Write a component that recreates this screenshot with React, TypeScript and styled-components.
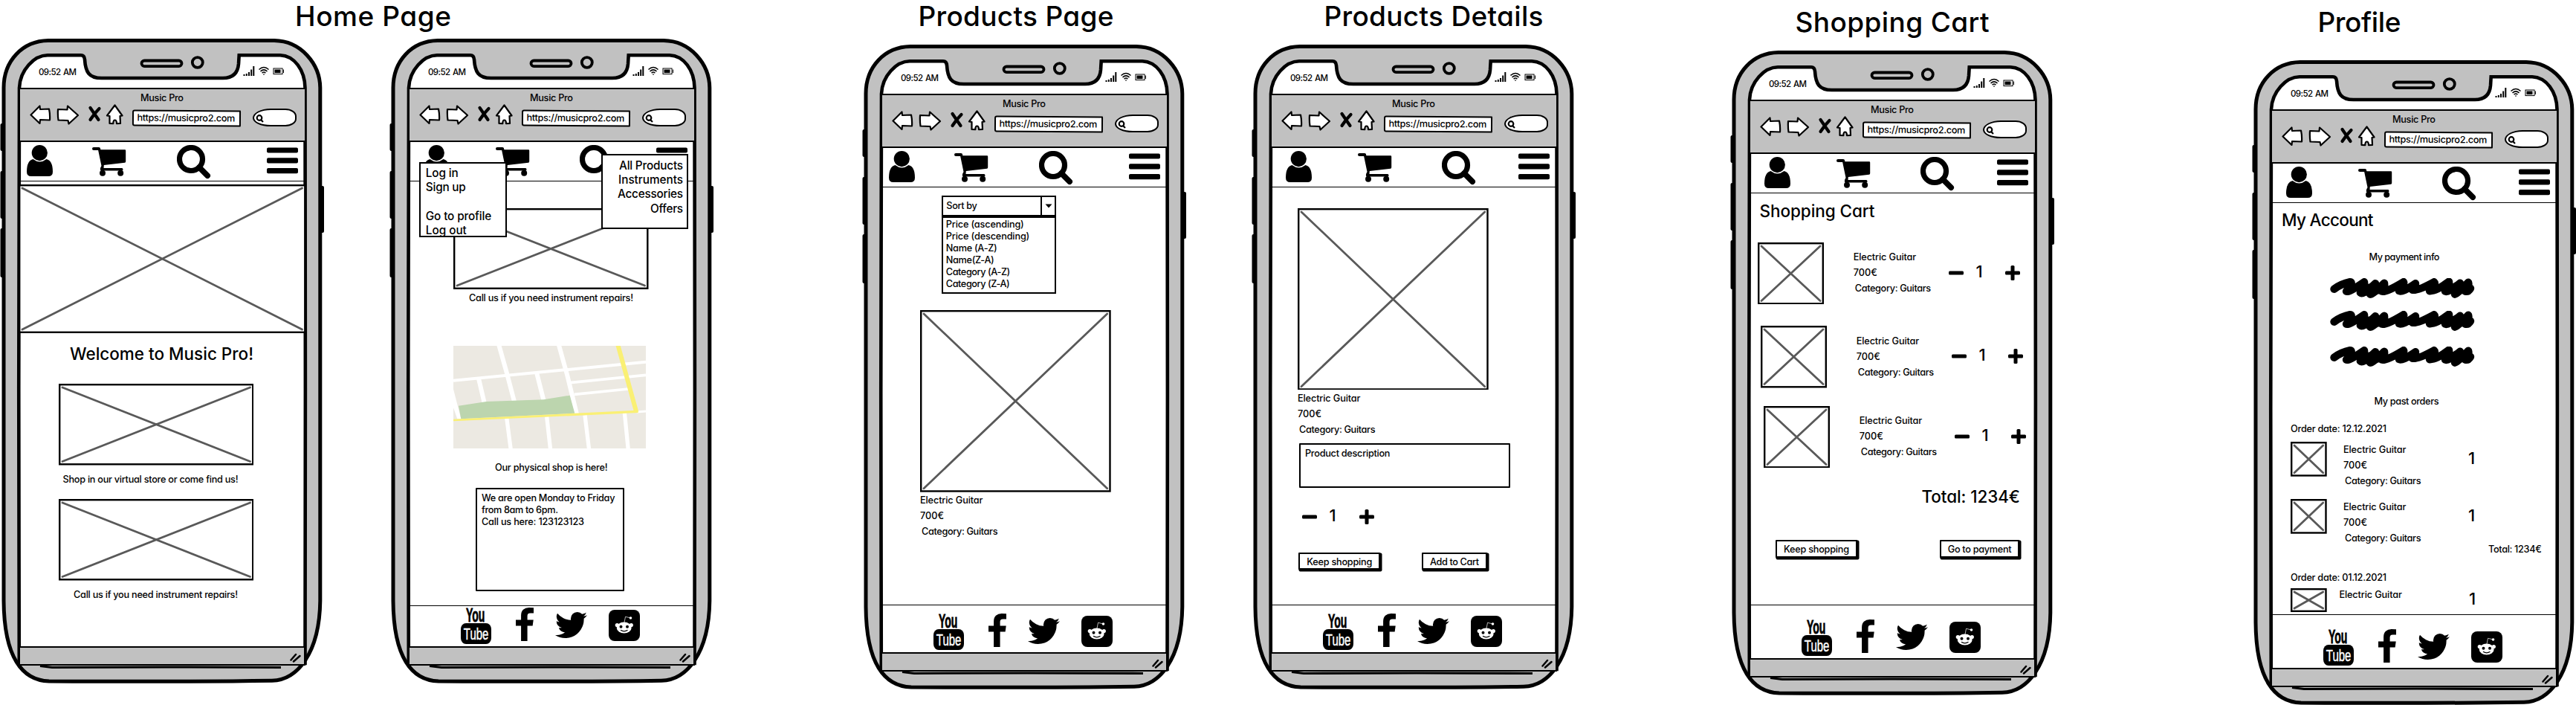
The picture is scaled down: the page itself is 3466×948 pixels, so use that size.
import React, { useLayoutEffect, useRef } from "react";
import styled, { createGlobalStyle, css } from "styled-components";

const INK = "#000";
const GREY = "#c1c1c1";

const GlobalStyle = createGlobalStyle`
  body {
    margin: 0;
    background: #fff;
    color: ${INK};
    font-family: Inter, "Open Sans", sans-serif;
    font-feature-settings: "cv11" 1, "kern" 1;
    overflow: hidden;
  }
  svg { display: block; flex: none; }
`;

/* ---------- text ---------- */

type Scale = "clock" | "note" | "menu" | "heading" | "title";

const scales = {
  clock: css`font-size: 11.500px; line-height: 16px; font-weight: 450; word-spacing: 1px;`,
  note: css`font-size: 12.700px; line-height: 17px; margin-bottom: -1px; font-weight: 480;`,
  menu: css`font-size: 15.300px; line-height: 19px; font-weight: 450;`,
  heading: css`font-size: 22.500px; line-height: 26px; font-weight: 500;`,
  title: css`font-size: 37px; line-height: 44px; font-weight: 540;`,
};

const TextLine = styled.div<{ $scale: Scale; $x: number; $gap: number }>`
  ${(p) => scales[p.$scale]}
  margin-left: ${(p) => p.$x}px;
  margin-top: ${(p) => p.$gap}px;
  white-space: pre;
  width: max-content;
  flex: none;
`;

interface LabelProps {
  children: string;
  width: number;
  scale?: Scale;
  x?: number;
  gap?: number;
}

/** A single line whose tracking is adjusted so that it fills a given width. */
function Label({ children, width, scale = "note", x = 0, gap = 0 }: LabelProps) {
  const ref = useRef<HTMLDivElement>(null);
  useLayoutEffect(() => {
    const el = ref.current;
    if (!el) return;
    el.style.letterSpacing = "0px";
    const natural = el.getBoundingClientRect().width;
    const space = (width + 1 - natural) / Math.max(1, children.length - 1);
    el.style.letterSpacing = `${space}px`;
    el.style.marginRight = `${-space}px`;
  }, [children, width]);
  return (
    <TextLine ref={ref} $scale={scale} $x={x} $gap={gap}>
      {children}
    </TextLine>
  );
}

const Digit = styled.div<{ $x: number; $gap?: number }>`
  font-size: 22px;
  line-height: 26px;
  font-weight: 500;
  margin-left: ${(p) => p.$x}px;
  margin-top: ${(p) => p.$gap ?? 0}px;
  width: 9px;
`;

/* ---------- phone shell ---------- */

const PhoneFrame = styled.div`
  position: relative;
  width: 437px;
  height: 868px;
  flex: none;
  display: flex;
  flex-direction: column;
`;

const ShellArt = styled.svg`
  position: absolute;
  left: 0;
  top: 0;
  z-index: 0;
`;

const Shell = () => (
  <ShellArt width="437" height="868" viewBox="0 0 437 868" fill="none">
    <g fill={INK}>
      <rect x="0.5" y="114" width="6" height="37" rx="2" />
      <rect x="0.5" y="178" width="6" height="64" rx="2" />
      <rect x="0.5" y="255" width="6" height="66" rx="2" />
      <rect x="429" y="198" width="7" height="63" rx="2" />
    </g>
    <path
      d="M65 2.500 H369 C405 3 430.500 34 430.800 66 V440 C431.500 560 431.500 660 430.800 756 C430 826 400 862.500 366 863.200 C260 864.800 160 864.500 66 864 C30 863 5.500 832 5 756 C4.500 660 4.500 560 5 440 V66 C5 30 30 3 65 2.500 Z"
      fill={GREY}
      stroke={INK}
      strokeWidth="5"
    />
    <path
      d="M25.800 840 C25.500 600 24.500 300 26 66 C27 42 46 22.500 64 22.300 H109 Q113.500 22.300 114 28 C115 44 119 53.500 138 53 H300 C314 53 320 46 321 34 L321.700 22.300 H377 C396 23 410 42 410.500 66 C411 300 411 600 410.500 840 Z"
      fill="#fff"
      stroke={INK}
      strokeWidth="4.600"
    />
    <rect x="190.500" y="29.500" width="54" height="7.600" rx="3.800" stroke={INK} strokeWidth="3.800" />
    <ellipse cx="265.800" cy="32" rx="7" ry="6.800" stroke={INK} strokeWidth="3.800" />
    <path d="M54 843.500 L70 845.500 Q220 844.500 378 845.500" stroke={INK} strokeWidth="3.200" />
  </ShellArt>
);

const StatusBar = styled.div`
  position: relative;
  height: 66px;
  flex: none;
  display: flex;
  align-items: flex-start;
  padding: 37px 54px 0 52px;
  box-sizing: border-box;
  justify-content: space-between;
`;

const StatusIcons = () => (
  <svg width="56" height="14" viewBox="0 0 56 14" fill="none" stroke={INK}>
    <path d="M1.500 13v-2M4.800 13v-3M8 13v-5M11.200 13V4.500M14.300 13V0" strokeWidth="2" />
    <g strokeWidth="1.500">
      <path d="M21.500 4.500q6.500-6 13 0M23.500 7q4.500-4.300 9 0M25.600 9.200q2.400-2.300 4.800 0" />
      <path d="M28 10.500v1" strokeWidth="2" />
    </g>
    <rect x="41" y="3" width="12" height="7.600" strokeWidth="1" />
    <rect x="42.500" y="4.500" width="8" height="4.600" fill={INK} stroke="none" />
    <path d="M54.500 4.500v4.500" strokeWidth="1" />
  </svg>
);

const BrowserBar = styled.div`
  position: relative;
  height: 73px;
  width: 383px;
  margin-left: 26.500px;
  box-sizing: border-box;
  flex: none;
  background: ${GREY};
  border: solid ${INK};
  border-width: 2px 0;
`;

const ToolRow = styled.div`
  display: flex;
  align-items: flex-start;
  padding-left: 13px;
  margin-top: 0.500px;
`;

const AddressBox = styled.div`
  margin: 8px 0 0 12px;
  width: 146px;
  height: 21.500px;
  box-sizing: border-box;
  border: 2px solid ${INK};
  border-radius: 3px 1px 1px 3px;
  background: #fff;
  transform: rotate(0.400deg);
`;

const SearchPill = styled.div`
  margin: 6.500px 0 0 16px;
  width: 59px;
  height: 23.500px;
  box-sizing: border-box;
  border: 2px solid ${INK};
  border-radius: 42% 26% 26% 42% / 55% 45% 45% 50%;
  background: #fff;
  padding: 6px 0 0 2px;
`;

const ToolIcons = () => (
  <svg width="126" height="28" viewBox="0 0 126 28" fill="#fff" stroke={INK} strokeWidth="2.200" strokeLinejoin="round">
    <path d="M1.500 14.500 L13.500 2.500 L14 7 L26 6.500 Q27.500 13.500 27 21.500 L14 21 L13.500 26 Z" />
    <path d="M38 7 L50.500 7.500 L51 2.500 L65 15 L52.500 26.500 L51.500 22 L38.500 21.500 Q37.500 14.500 38 7 Z" />
    <path d="M81.500 5 Q86 11.500 92.500 21 M93.500 6 Q87 12.500 81.500 21" strokeWidth="4.200" strokeLinecap="round" />
    <path d="M114.500 1.500 L124.500 15.500 L121.500 16 L122 26 L117 26.200 Q117 21.500 114.500 21.500 Q112.300 21.500 112.300 26.200 L107.500 26 L107.500 16 L104 15.500 Z" />
  </svg>
);

const PillLens = () => (
  <svg width="11" height="11" viewBox="0 0 11 11" fill="none" stroke={INK} strokeWidth="2.200">
    <circle cx="5" cy="4.500" r="3.300" />
    <path d="M7 7l3 3" />
  </svg>
);

const BrowserChrome = () => (
  <BrowserBar>
    <Label width={57} x={162.500} gap={3}>Music Pro</Label>
    <ToolRow>
      <ToolIcons />
      <AddressBox>
        <Label width={131} x={4.500} gap={0}>https://musicpro2.com</Label>
      </AddressBox>
      <SearchPill><PillLens /></SearchPill>
    </ToolRow>
  </BrowserBar>
);

/* ---------- site navigation ---------- */

const NavBar = styled.nav<{ $inset: boolean }>`
  position: relative;
  height: 53px;
  width: 383px;
  margin-left: 26.500px;
  box-sizing: border-box;
  flex: none;
  border-bottom: 1.500px solid ${INK};
  display: grid;
  grid-template-columns: ${(p) => (p.$inset ? "97px 113px 103px 42px" : "88px 114px 121px 42px")};
  padding: 3.700px 0 0 ${(p) => (p.$inset ? 19.500 : 9.500)}px;
`;

const PersonIcon = () => (
  <svg width="35" height="42" viewBox="0 0 35 42" fill={INK}>
    <path d="M8.500 19 Q17.500 26 26.500 19 Q35 21 35 36 Q35 42 29 42 H6 Q0 42 0 36 Q0 21 8.500 19Z" />
    <circle cx="17.300" cy="10.600" r="10.600" />
  </svg>
);

const CartIcon = () => (
  <svg width="46" height="42" viewBox="0 -3 46 42" fill={INK}>
    <rect width="11" height="4" rx="2" />
    <path d="M7.500 1 H10.500 L11.500 3.300 H44 Q45.200 3.300 45.200 4.500 V19 Q45.200 20.500 44 20.700 L15.800 24 L15.500 28 H40 Q41.500 28 41.500 30 Q41.500 31.500 40 31.500 H11.500 Q10.500 31 11 28 L12.500 25 Z" />
    <circle cx="14" cy="34.700" r="4" />
    <circle cx="38.200" cy="34.700" r="4" />
  </svg>
);

const SearchIcon = () => (
  <svg width="46" height="46" viewBox="0 0 46 46" fill="none" stroke={INK}>
    <circle cx="19" cy="19" r="15.500" strokeWidth="7.200" />
    <path d="M30 30 L41.200 41.200" strokeWidth="7.600" strokeLinecap="round" />
  </svg>
);

const MenuIcon = () => (
  <svg width="42" height="42" viewBox="0 0 42 42" fill={INK}>
    <rect y="3.500" width="42" height="7" rx="2" />
    <rect y="17.200" width="42" height="7.200" rx="2" />
    <rect y="31" width="42" height="7.200" rx="2" />
  </svg>
);

/* ---------- footer ---------- */

const Footer = styled.footer<{ $height: number }>`
  position: relative;
  height: ${(p) => p.$height}px;
  width: 383px;
  margin-left: 26.500px;
  box-sizing: border-box;
  flex: none;
  border-top: 1.500px solid ${INK};
  display: flex;
  align-items: flex-end;
  padding-left: 69.500px;
`;

const Social = styled.div<{ $left: number; $bottom: number }>`
  margin-left: ${(p) => p.$left}px;
  margin-bottom: ${(p) => p.$bottom}px;
`;

const SocialLinks = () => (
  <>
    <Social $left={0} $bottom={3.500}>
      <svg width="41" height="58" viewBox="0 -9 41 58" fontFamily="'Liberation Sans', sans-serif">
        <text transform="translate(7 18.700) scale(0.560 1)" fontSize="25" fontWeight="700" stroke={INK} strokeWidth="0.800">You</text>
        <rect y="21" width="41" height="28" rx="7" ry="8" />
        <text transform="translate(3.800 43) scale(0.665 1)" fontSize="22.500" fill="#fff" stroke="#fff" strokeWidth="0.500">Tube</text>
      </svg>
    </Social>
    <Social $left={32.500} $bottom={7.500}>
      <svg width="24" height="45" viewBox="479 0 864 1664" preserveAspectRatio="none">
        <path d="M1343 12v264h-157q-86 0-116 36t-30 108v189h293l-39 296h-254v759h-306v-759h-255v-296h255v-218q0-186 104-288.500t277-102.500q147 0 228 12z" />
      </svg>
    </Social>
    <Social $left={29} $bottom={11}>
      <svg width="43" height="35" viewBox="108 256 1576 1280">
        <path d="M1684 408q-67 98-162 167 1 14 1 42 0 130-38 259.500t-115.500 248.500-184.500 210.500-258 146-323 54.500q-271 0-496-145 35 4 78 4 225 0 401-138-105-2-188-64.500t-114-159.500q33 5 61 5 43 0 85-11-112-23-185.500-111.500t-73.500-205.500v-4q68 38 146 41-66-44-105-115t-39-154q0-88 44-163 121 149 294.500 238.500t371.500 99.500q-8-38-8-74 0-134 94.500-228.500t228.500-94.500q140 0 236 102 109-21 205-78-37 115-142 178 93-10 186-50z" />
      </svg>
    </Social>
    <Social $left={29.500} $bottom={7.500}>
      <svg width="42" height="42" viewBox="0 0 42 42">
        <rect width="42" height="42" rx="8" />
        <g fill="#fff">
          <ellipse cx="20.700" cy="24" rx="10" ry="7.600" />
          <circle cx="11.300" cy="20.500" r="2.600" />
          <circle cx="30.300" cy="20.500" r="2.600" />
          <circle cx="29.500" cy="11" r="1.800" />
        </g>
        <path d="M21 17 L22.500 9.300 L28 10.600" fill="none" stroke="#fff" strokeWidth="0.700" />
        <circle cx="16.500" cy="22.800" r="2" />
        <circle cx="25" cy="22.800" r="2" />
        <path d="M16 27.300 Q20.700 30.500 25.500 27.300" fill="none" stroke={INK} strokeWidth="1.200" />
      </svg>
    </Social>
  </>
);

const BottomBar = styled.div`
  position: relative;
  margin: 0 0 0 25px;
  width: 386px;
  height: 26px;
  box-sizing: border-box;
  flex: none;
  border: 2px solid ${INK};
  background: ${GREY};
  display: flex;
  justify-content: flex-end;
  padding: 7px 4px 0 0;
`;

const Grip = () => (
  <svg width="15" height="13" viewBox="0 0 15 13" stroke={INK} strokeWidth="2.500" strokeLinecap="round">
    <path d="M1.500 9.500 L8 2 M5 11.500 L13.500 4" />
  </svg>
);

/* ---------- phone ---------- */

const PageBody = styled.main`
  position: relative;
  flex: 1;
  min-height: 0;
  display: flex;
  flex-direction: column;
  align-items: flex-start;
`;

const Foot = styled.div`
  height: 25px;
  flex: none;
`;

interface PhoneProps {
  children: React.ReactNode;
  inset?: boolean;
  footer?: number;
  overlay?: React.ReactNode;
}

const Phone = ({ children, inset = false, footer = 0, overlay }: PhoneProps) => (
  <PhoneFrame>
    <Shell />
    <StatusBar>
      <Label scale="clock" width={50}>09:52 AM</Label>
      <StatusIcons />
    </StatusBar>
    <BrowserChrome />
    <NavBar $inset={inset}>
      <PersonIcon />
      <CartIcon />
      <SearchIcon />
      <MenuIcon />
    </NavBar>
    <PageBody>{children}</PageBody>
    {footer > 0 && (
      <Footer $height={footer}>
        <SocialLinks />
      </Footer>
    )}
    <BottomBar><Grip /></BottomBar>
    <Foot />
    {overlay}
  </PhoneFrame>
);

/* ---------- content parts ---------- */

const PictureArt = styled.svg<{ $x: number; $gap: number }>`
  margin-left: ${(p) => p.$x}px;
  margin-top: ${(p) => p.$gap}px;
`;

interface PictureProps {
  width: number;
  height: number;
  x?: number;
  gap?: number;
}

const Picture = ({ width: w, height: h, x = 0, gap = 0 }: PictureProps) => (
  <PictureArt $x={x} $gap={gap} width={w} height={h} viewBox={`0 0 ${w} ${h}`}>
    <rect x="1.200" y="1.200" width={w - 2.400} height={h - 2.400} fill="#fff" stroke={INK} strokeWidth="2.400" />
    <path
      d={`M5 5 L${w - 5} ${h - 5} M${w - 5} 5 L5 ${h - 5}`}
      stroke="#595959"
      strokeWidth="2.800"
      strokeLinecap="round"
    />
  </PictureArt>
);

const InfoBlock = styled.div<{ $x: number; $gap: number }>`
  margin-left: ${(p) => p.$x}px;
  margin-top: ${(p) => p.$gap}px;
  display: flex;
  flex-direction: column;
  gap: 5px;
  width: 105px;
  flex: none;
`;

const ProductInfo = ({ x = 0, gap = 0 }: { x?: number; gap?: number }) => (
  <InfoBlock $x={x} $gap={gap}>
    <Label width={83.500}>Electric Guitar</Label>
    <Label width={31}>700€</Label>
    <Label width={101.500} x={2}>Category: Guitars</Label>
  </InfoBlock>
);

const QuantityRow = styled.div<{ $x: number; $gap: number }>`
  margin-left: ${(p) => p.$x}px;
  margin-top: ${(p) => p.$gap}px;
  display: flex;
  flex: none;
  width: 97px;
`;

const Quantity = ({ x, gap }: { x: number; gap: number }) => (
  <QuantityRow $x={x} $gap={gap}>
    <svg width="20" height="28" viewBox="0 0 20 28"><rect y="12.500" width="20" height="5" rx="1.500" /></svg>
    <Digit $x={16.500}>1</Digit>
    <svg width="51" height="28" viewBox="-31 0 51 28">
      <rect y="12.500" width="20" height="5" rx="1.500" />
      <rect x="7.500" y="5" width="5" height="20" rx="1.500" />
    </svg>
  </QuantityRow>
);

const ButtonRow = styled.div<{ $x: number; $gap: number; $between: number }>`
  display: flex;
  margin-left: ${(p) => p.$x}px;
  margin-top: ${(p) => p.$gap}px;
  gap: ${(p) => p.$between}px;
`;

const Button = styled.button<{ $width: number }>`
  width: ${(p) => p.$width - 2}px;
  height: 23.500px;
  padding: 0 0 0 9px;
  display: flex;
  align-items: center;
  border: 2px solid ${INK};
  border-radius: 1px;
  box-shadow: 1.500px 1.500px 0 1px ${INK};
  background: #fff;
  color: ${INK};
  font-family: inherit;
  font-feature-settings: inherit;
`;

const NoteBox = styled.div<{ $x: number; $gap: number; $width: number; $height: number; $pad: number }>`
  margin-left: ${(p) => p.$x}px;
  margin-top: ${(p) => p.$gap}px;
  width: ${(p) => p.$width}px;
  height: ${(p) => p.$height}px;
  box-sizing: border-box;
  border: 2px solid ${INK};
  border-radius: 1px;
  padding: ${(p) => p.$pad}px 0 0 5.700px;
  background: #fff;
  flex: none;
`;

const Popup = styled.div<{ $left: number; $top: number; $end?: boolean }>`
  position: absolute;
  left: ${(p) => p.$left}px;
  top: ${(p) => p.$top}px;
  width: 117.500px;
  height: 101px;
  box-sizing: border-box;
  border: 2px solid ${INK};
  background: #fff;
  display: flex;
  flex-direction: column;
  align-items: ${(p) => (p.$end ? "flex-end" : "flex-start")};
  padding: ${(p) => (p.$end ? "3.700px 5px 0 0" : "3.700px 0 0 6.500px")};
`;

const MapArt = styled.svg`
  margin: 57px 0 0 86px;
`;

const StreetMap = () => (
  <MapArt width="259" height="138" viewBox="0 0 777 414" fill="none" stroke="#fff">
    <rect width="777" height="414" fill="#ece9e2" stroke="none" />
    <path d="M0 140 L450 97 L777 65" strokeWidth="12" />
    <path d="M183 -6 L213 100 L246 225 M425 -6 L460 120 L498 275 M102 132 L125 230 M337 112 L364 218" strokeWidth="18" />
    <path d="M470 149 L777 118 M488 196 L706 174" strokeWidth="11" />
    <path d="M215 290 L232 420 M377 286 L392 420 M531 280 L548 420 M691 270 L706 420" strokeWidth="16" />
    <path d="M740 267 L777 264" strokeWidth="9" />
    <path d="M0 175 L31 295 H16 L0 250Z" fill="#fff" stroke="none" />
    <path d="M21 242 L133 225 L365 217 L470 200 L490 272 L31 295Z" fill="#bcd5ae" stroke="none" />
    <path d="M0 296 L740 260 L747 270 L0 304Z" fill="#faf074" stroke="none" />
    <path d="M664 -4 L739 268" stroke="#faf074" strokeWidth="18" />
  </MapArt>
);

const Combo = styled.div`
  margin: 11px 0 0 107.300px;
  width: 153.500px;
  flex: none;
`;

const ComboHead = styled.div`
  height: 25.500px;
  box-sizing: border-box;
  border: 2px solid ${INK};
  border-bottom: 0;
  display: flex;
  justify-content: space-between;
`;

const ComboArrow = styled.div`
  width: 18.500px;
  border-left: 2px solid ${INK};
  padding: 8.500px 0 0 3.500px;
  box-sizing: border-box;
`;

const ComboList = styled.div`
  height: 106px;
  box-sizing: border-box;
  border: 2.500px solid ${INK};
  border-top-width: 4px;
  padding: 0.500px 0 0 3.500px;
`;

const ListRow = styled.div<{ $x: number; $gap: number; $height: number }>`
  display: flex;
  align-items: flex-start;
  margin-left: ${(p) => p.$x}px;
  margin-top: ${(p) => p.$gap}px;
  height: ${(p) => p.$height}px;
  flex: none;
`;

const CartLine = ({ x, gap }: { x: number; gap: number }) => (
  <ListRow $x={x} $gap={gap} $height={83.500}>
    <Picture width={89} height={83.500} />
    <ProductInfo x={39.700} gap={11.500} />
    <Quantity x={23.300} gap={26} />
  </ListRow>
);

const ScribbleArt = styled.svg<{ $gap: number }>`
  margin: ${(p) => p.$gap}px 0 0 105px;
`;

const Scribble = ({ gap }: { gap: number }) => (
  <ScribbleArt $gap={gap} width="195" height="27" viewBox="13 4.300 195 27">
    <path
      d="M18.500 19 Q28 12 40 9.500 Q45 9.500 35 22 Q38 24 59 9.500 Q60 14 54 24 Q58 27 74 11.500 Q72 18 67 26 Q72 25 86 11 Q87 17 83 22 Q88 24 112 9.500 Q114 12 106 21.500 Q110 24 128 11.500 Q128 16 124 20 Q130 22 153 9.500 Q156 12 147 21.500 Q156 22 173 9 Q174 14 168 22 Q172 24 188 11 Q188 18 181 26 Q184 26 199 10 Q201 14 195 22 Q199 23 202 18"
      fill="none"
      stroke={INK}
      strokeWidth="10.400"
      strokeLinecap="round"
      strokeLinejoin="round"
    />
    <path
      d="M37 18 L56 18 M92 18 L110 16 L126 17 L150 16 L168 18"
      stroke={INK}
      strokeWidth="6"
      fill="none"
    />
    <path d="M54 19 L90 18.500 M166 18 L202 18.500" stroke={INK} strokeWidth="14" />
  </ScribbleArt>
);

/* ---------- board ---------- */

const Board = styled.div`
  width: 3466px;
  height: 948px;
  display: flex;
  align-items: flex-start;
  overflow: hidden;
`;

const Column = styled.section<{ $left: number; $top?: number }>`
  margin-left: ${(p) => p.$left}px;
  padding-top: ${(p) => p.$top ?? 0}px;
  flex: none;
`;

const Phones = styled.div<{ $top: number }>`
  display: flex;
  gap: 87px;
  margin-top: ${(p) => p.$top}px;
`;

export default function App() {
  return (
    <>
      <GlobalStyle />
      <Board>
        <Column $left={0}>
          <Label scale="title" width={209} x={397}>Home Page</Label>
          <Phones $top={8}>
            <Phone>
              <Picture width={386.500} height={200} x={25} gap={4} />
              <Label scale="heading" width={246} x={94} gap={15}>Welcome to Music Pro!</Label>
              <Picture width={262.500} height={109.500} x={78.500} gap={27.300} />
              <Label width={235} x={84.500} gap={10.500}>Shop in our virtual store or come find us!</Label>
              <Picture width={262.500} height={109.500} x={78.500} gap={19} />
              <Label width={220} x={99} gap={10.500}>Call us if you need instrument repairs!</Label>
            </Phone>
            <Phone
              inset
              footer={55.500}
              overlay={
                <>
                  <Popup $left={40.300} $top={165.700}>
                    <Label scale="menu" width={43}>Log in</Label>
                    <Label scale="menu" width={53}>Sign up</Label>
                    <Label scale="menu" width={87.500} gap={20}>Go to profile</Label>
                    <Label scale="menu" width={54}>Log out</Label>
                  </Popup>
                  <Popup $left={284.500} $top={155.300} $end>
                    <Label scale="menu" width={85}>All Products</Label>
                    <Label scale="menu" width={86}>Instruments</Label>
                    <Label scale="menu" width={87}>Accessories</Label>
                    <Label scale="menu" width={43} gap={1}>Offers</Label>
                  </Popup>
                </>
              }
            >
              <Picture width={262.500} height={109} x={86.300} gap={35.500} />
              <Label width={220} x={107} gap={3}>Call us if you need instrument repairs!</Label>
              <StreetMap />
              <Label width={150.500} x={142} gap={17.800}>Our physical shop is here!</Label>
              <NoteBox $x={116.300} $gap={19.500} $width={200} $height={139} $pad={3.500}>
                <Label width={178.500}>We are open Monday to Friday</Label>
                <Label width={102} gap={-0.500}>from 8am to 6pm.</Label>
                <Label width={137}>Call us here: 123123123</Label>
              </NoteBox>
            </Phone>
          </Phones>
        </Column>

        <Column $left={199}>
          <Label scale="title" width={262} x={75.500}>Products Page</Label>
          <Phones $top={16}>
            <Phone footer={64}>
              <Combo>
                <ComboHead>
                  <Label width={40.500} x={4} gap={3}>Sort by</Label>
                  <ComboArrow>
                    <svg width="10" height="6" viewBox="0 0 10 6"><path d="M0.500 0.500H9.500L5 5.500Z" /></svg>
                  </ComboArrow>
                </ComboHead>
                <ComboList>
                  <Label width={104}>Price (ascending)</Label>
                  <Label width={111.500}>Price (descending)</Label>
                  <Label width={68}>Name (A-Z)</Label>
                  <Label width={64}>Name(Z-A)</Label>
                  <Label width={85.500}>Category (A-Z)</Label>
                  <Label width={85}>Category (Z-A)</Label>
                </ComboList>
              </Combo>
              <Picture width={256.700} height={244.700} x={78.300} gap={22.500} />
              <ProductInfo x={78} gap={2.800} />
            </Phone>
          </Phones>
        </Column>

        <Column $left={87}>
          <Label scale="title" width={294} x={97.500}>Products Details</Label>
          <Phones $top={16}>
            <Phone inset footer={64}>
              <Picture width={256.700} height={244.700} x={62.300} gap={27.500} />
              <ProductInfo x={62} gap={2.600} />
              <NoteBox $x={64.300} $gap={11} $width={283.500} $height={60} $pad={3.500}>
                <Label width={113.500}>Product description</Label>
              </NoteBox>
              <Quantity x={68} gap={24.500} />
              <ButtonRow $x={63.300} $gap={34.500} $between={56}>
                <Button type="button" $width={111.700}><Label width={87}>Keep shopping</Label></Button>
                <Button type="button" $width={90}><Label width={65}>Add to Cart</Label></Button>
              </ButtonRow>
            </Phone>
          </Phones>
        </Column>

        <Column $left={207} $top={8}>
          <Label scale="title" width={260} x={87.500}>Shopping Cart</Label>
          <Phones $top={16}>
            <Phone inset footer={72}>
              <Label scale="heading" width={154} x={39.500} gap={10.600}>Shopping Cart</Label>
              <CartLine x={37} gap={29} />
              <CartLine x={41} gap={29} />
              <CartLine x={45} gap={24} />
              <Label scale="heading" width={131.500} x={257.500} gap={26}>Total: 1234€</Label>
              <ButtonRow $x={61} $gap={45} $between={111}>
                <Button type="button" $width={111.700}><Label width={87}>Keep shopping</Label></Button>
                <Button type="button" $width={109}><Label width={85}>Go to payment</Label></Button>
              </ButtonRow>
            </Phone>
          </Phones>
        </Column>

        <Column $left={265} $top={8}>
          <Label scale="title" width={111} x={88.500}>Profile</Label>
          <Phones $top={29}>
            <Phone inset footer={72}>
              <Label scale="heading" width={122.500} x={40} gap={9.700}>My Account</Label>
              <Label width={94} x={157.500} gap={28.800}>My payment info</Label>
              <Scribble gap={21} />
              <Scribble gap={16.200} />
              <Scribble gap={21.300} />
              <Label width={86} x={164.500} gap={38.500}>My past orders</Label>
              <Label width={128} x={52} gap={21}>Order date: 12.12.2021</Label>
              <ListRow $x={52.300} $gap={9.800} $height={77}>
                <Picture width={48.700} height={46.700} />
                <ProductInfo x={22} gap={2.200} />
                <Digit $x={63} $gap={8.400}>1</Digit>
              </ListRow>
              <ListRow $x={52.300} $gap={0} $height={59.200}>
                <Picture width={48.700} height={46.700} />
                <ProductInfo x={22} gap={2.200} />
                <Digit $x={63} $gap={8.400}>1</Digit>
              </ListRow>
              <Label width={70.700} x={318}>Total: 1234€</Label>
              <Label width={128} x={52} gap={21.300}>Order date: 01.12.2021</Label>
              <ListRow $x={52.300} $gap={7.200} $height={32}>
                <Picture width={48.700} height={32} />
                <Label width={83.500} x={16.400} gap={0.500}>Electric Guitar</Label>
                <Digit $x={90} $gap={0.700}>1</Digit>
              </ListRow>
            </Phone>
          </Phones>
        </Column>
      </Board>
    </>
  );
}
